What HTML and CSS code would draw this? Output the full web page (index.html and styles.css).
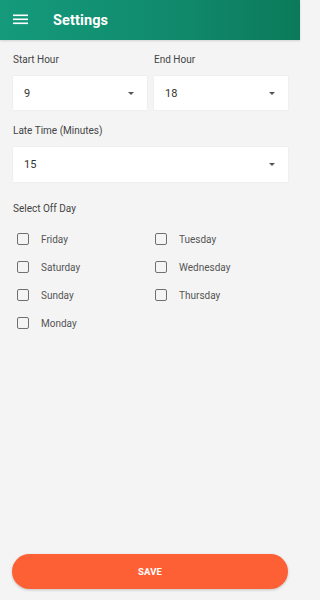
FILE: index.html
```html
<!DOCTYPE html>
<html>
<head>
<meta charset="utf-8">
<meta name="viewport" content="width=300">
<link rel="stylesheet" href="styles.css">
</head>
<body>
<div class="page">
  <header class="appbar">
    <svg class="menu" width="15" height="12" viewBox="0 0 15 12"><rect x="0" y="0.5" width="15" height="1.6" fill="#fff"/><rect x="0" y="4.5" width="15" height="1.6" fill="#fff"/><rect x="0" y="8.5" width="15" height="1.6" fill="#fff"/></svg>
    <span class="title">Settings</span>
  </header>
  <main class="content">
    <div class="row2">
      <div class="field">
        <div class="label">Start Hour</div>
        <div class="select"><span>9</span><span class="caret"></span></div>
      </div>
      <div class="field">
        <div class="label">End Hour</div>
        <div class="select"><span>18</span><span class="caret"></span></div>
      </div>
    </div>
    <div class="field late">
      <div class="label">Late Time (Minutes)</div>
      <div class="select tall"><span>15</span><span class="caret"></span></div>
    </div>
    <div class="label offday">Select Off Day</div>
    <div class="days">
      <label class="day"><span class="box"></span>Friday</label>
      <label class="day"><span class="box"></span>Tuesday</label>
      <label class="day"><span class="box"></span>Saturday</label>
      <label class="day"><span class="box"></span>Wednesday</label>
      <label class="day"><span class="box"></span>Sunday</label>
      <label class="day"><span class="box"></span>Thursday</label>
      <label class="day"><span class="box"></span>Monday</label>
    </div>
  </main>
  <div class="footer">
    <button class="save">SAVE</button>
  </div>
</div>
</body>
</html>
```
FILE: styles.css
```css
html, body {
  margin: 0;
  padding: 0;
  background: #f4f4f4;
  font-family: Roboto, "Liberation Sans", sans-serif;
  color: #333;
}
.page {
  width: 300px;
  min-height: 600px;
  display: flex;
  flex-direction: column;
}
.appbar {
  height: 40px;
  display: flex;
  align-items: center;
  padding-left: 13px;
  background: linear-gradient(90deg, #159a7c 0%, #10896b 60%, #0b7a5a 100%);
  box-shadow: 0 1px 2px rgba(0,0,0,0.15);
}
.menu {
  display: block;
}
.title {
  margin-left: 25px;
  color: #fff;
  font-size: 14.5px;
  font-weight: 700;
  letter-spacing: 0.1px;
}
.content {
  padding: 13px 12px 0 13px;
  flex: 1;
}
.row2 {
  display: grid;
  grid-template-columns: 1fr 1fr;
  gap: 7px;
}
.label {
  font-size: 10px;
  line-height: 14px;
  color: #444;
}
.select {
  margin-top: 9px;
  height: 34px;
  background: #fff;
  box-shadow: 0 0 1px rgba(0,0,0,0.12);
  display: flex;
  align-items: center;
  justify-content: space-between;
  padding: 0 13px 0 11px;
  font-size: 11px;
  color: #333;
}
.select.tall {
  height: 35px;
}
.caret {
  width: 0;
  height: 0;
  border-left: 3.5px solid transparent;
  border-right: 3.5px solid transparent;
  border-top: 3.5px solid #555;
}
.late {
  margin-top: 14px;
}
.offday {
  margin-top: 20px;
}
.days {
  display: grid;
  grid-template-columns: 138px 1fr;
  margin-top: 9px;
  padding-left: 4px;
}
.day {
  height: 28px;
  display: flex;
  align-items: center;
  font-size: 10px;
  color: #555;
}
.box {
  width: 10px;
  height: 10px;
  border: 1.5px solid #707070;
  border-radius: 2px;
  margin-right: 12px;
  box-sizing: content-box;
}
.footer {
  padding: 0 12px 11px 12px;
}
.save {
  display: block;
  width: 100%;
  height: 35px;
  border: none;
  border-radius: 18px;
  background: #fe6036;
  color: #fff;
  font-family: Roboto, "Liberation Sans", sans-serif;
  font-weight: 700;
  font-size: 9.5px;
  letter-spacing: 0.2px;
  box-shadow: 0 1px 3px rgba(0,0,0,0.2);
}
```
